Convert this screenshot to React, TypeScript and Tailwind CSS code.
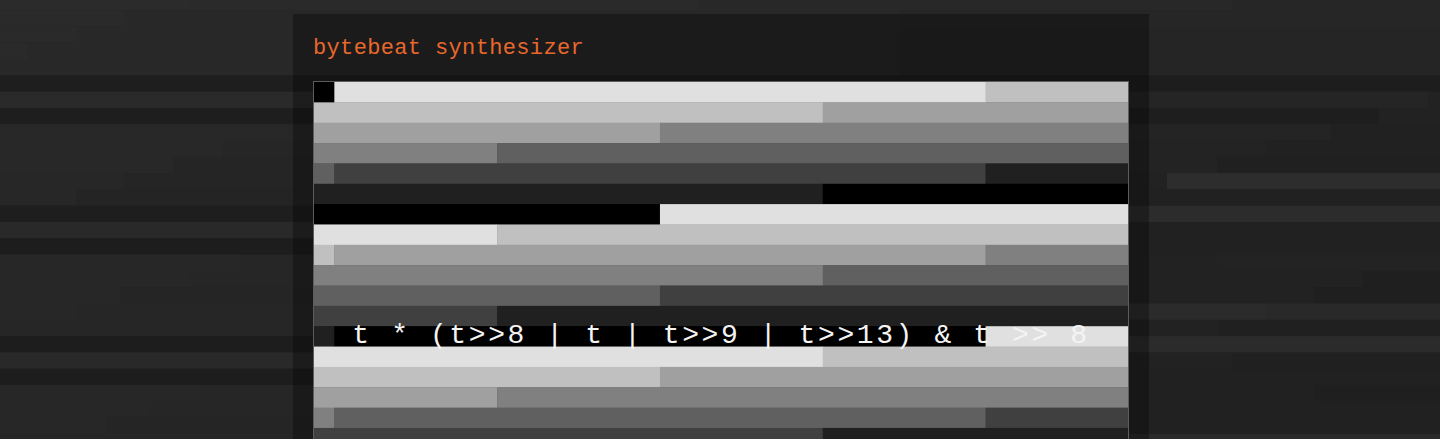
import React from "react";

// backdrop rows: [x, colour] segments, each row 16.3px tall starting at y = -6.2
const BG_ROWS: [number, string][][] = [
  [[0, "#2b2b2b"], [190, "#2a2a2a"], [697, "#282828"], [1232, "#262626"]],
  [[0, "#2a2a2a"], [124, "#282828"], [900, "#262626"]],
  [[0, "#2a2a2a"], [76, "#282828"], [900, "#252525"]],
  [[0, "#2a2a2a"], [27, "#282828"], [900, "#252525"]],
  [[0, "#282828"], [900, "#252525"]],
  [[0, "#1e1e1e"], [900, "#1d1d1d"]],
  [[0, "#2a2a2a"], [900, "#252525"], [1428, "#222222"]],
  [[0, "#1e1e1e"], [1379, "#222222"]],
  [[0, "#282828"], [288, "#272727"], [900, "#242424"], [1330, "#212121"]],
  [[0, "#282828"], [222, "#262626"], [900, "#232323"], [1265, "#212121"]],
  [[0, "#282828"], [173, "#252525"], [900, "#232323"], [1217, "#202020"]],
  [[0, "#272727"], [124, "#252525"], [900, "#222222"], [1167, "#2d2d2d"]],
  [[0, "#272727"], [76, "#242424"], [900, "#212121"]],
  [[0, "#1e1e1e"], [900, "#2c2c2c"]],
  [[0, "#292929"], [900, "#212121"]],
  [[0, "#1d1d1d"], [900, "#212121"]],
  [[0, "#272727"], [240, "#262626"], [900, "#222222"], [1217, "#232323"]],
  [[0, "#272727"], [190, "#262626"], [900, "#222222"], [1363, "#1f1f1f"]],
  [[0, "#272727"], [120, "#252525"], [900, "#222222"], [1314, "#1f1f1f"]],
  [[0, "#272727"], [76, "#262626"], [900, "#2b2b2b"], [1265, "#292929"]],
  [[0, "#262626"], [900, "#222222"], [1217, "#202020"]],
  [[0, "#1d1d1d"], [900, "#2b2b2b"]],
  [[0, "#292929"], [900, "#222222"], [1232, "#202020"]],
  [[0, "#1d1d1d"], [900, "#212121"]],
  [[0, "#272727"], [200, "#262626"], [900, "#212121"], [1314, "#1f1f1f"]],
  [[0, "#272727"], [150, "#262626"], [900, "#212121"]],
  [[0, "#272727"], [107, "#252525"], [900, "#212121"]],
  [[0, "#262626"], [900, "#2a2a2a"]],
];

const COLS = 40;
const ROWS = 25;
const CELL = 814 / COLS;

const sample = (i: number) => (256 - 32 * Math.ceil(i / 32)) & 255;

function Backdrop() {
  return (
    <svg
      className="absolute left-0 top-0 h-[460px] w-[1440px]"
      viewBox="0 0 1440 460"
      aria-hidden
    >
      {BG_ROWS.map((segs, r) =>
        segs.map(([x, c], k) => {
          const end = k + 1 < segs.length ? segs[k + 1][0] : 1440;
          return (
            <rect
              key={`${r}-${k}`}
              x={x}
              y={-6.2 + 16.3 * r}
              width={end - x}
              height={16.5}
              fill={c}
            />
          );
        })
      )}
    </svg>
  );
}

function Scope() {
  // merge runs of equal value in each row so no seams show between cells
  const runs = [];
  for (let r = 0; r < ROWS; r++) {
    let start = 0;
    for (let c = 1; c <= COLS; c++) {
      const prev = sample(r * COLS + c - 1);
      if (c === COLS || sample(r * COLS + c) !== prev) {
        runs.push(
          <rect
            key={`${r}-${start}`}
            x={start}
            y={r}
            width={c - start + (c === COLS ? 0 : 0.02)}
            height={r === ROWS - 1 ? 1 : 1.02}
            fill={`rgb(${prev},${prev},${prev})`}
          />
        );
        start = c;
      }
    }
  }
  return (
    <div className="relative border border-[#5c5c5c] bg-black">
      <svg
        className="block"
        width={814}
        height={ROWS * CELL}
        viewBox={`0 0 ${COLS} ${ROWS}`}
        preserveAspectRatio="none"
      >
        {runs}
      </svg>
      <div className="absolute inset-x-0 top-[238px] text-center font-['Liberation_Mono',monospace] text-[28px] leading-[32px] tracking-[2.6px] whitespace-pre text-[#f4f4f4]">
        t * (t&gt;&gt;8 | t | t&gt;&gt;9 | t&gt;&gt;13) &amp; t &gt;&gt; 8
      </div>
    </div>
  );
}

export default function App() {
  return (
    <div className="relative h-screen overflow-hidden bg-[#262626]">
      <Backdrop />
      <div className="relative flex justify-center pl-[2px] pt-[14px]">
        <div className="w-[856px] bg-[rgba(0,0,0,0.3)] p-5">
          <h1 className="mb-[17px] font-['Liberation_Mono',monospace] text-[22px] leading-[30px] tracking-[0.35px] text-[#e8682c]">
            bytebeat synthesizer
          </h1>
          <Scope />
        </div>
      </div>
    </div>
  );
}
